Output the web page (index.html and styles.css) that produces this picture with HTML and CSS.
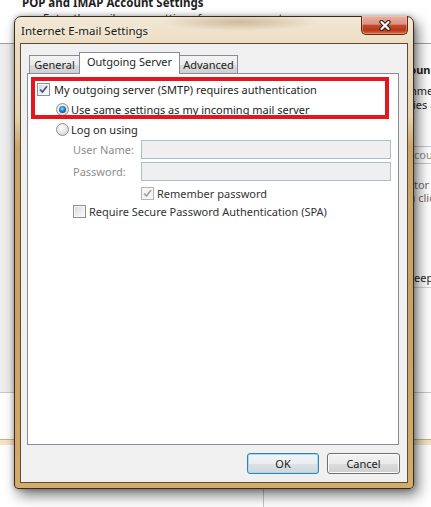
FILE: index.html
```html
<!doctype html>
<html lang="en">
<head>
    <!-- Title of the page -->
    <title>Internet E-mail Settings</title>
    <meta charset="utf-8" />
    <link rel="stylesheet" href="styles.css">
</head>
<body>
    <!-- Account wizard behind the dialog -->
    <div class="wizard">
        <div class="wiz-head">
            <div class="wiz-title">POP and IMAP Account Settings</div>
            <div class="wiz-sub">Enter the mail server settings for your account.</div>
        </div>
        <div class="wiz-body">
            <div class="wiz-left"></div>
            <div class="wiz-right">
                <div class="r-title">Test Account Settings</div>
                <div class="r-text first">We recommend that you test</div>
                <div class="r-text">your entries are correct.</div>
                <div class="r-btn">Test Account Settings ...</div>
                <div class="r-note first">Use monitor to test account settings</div>
                <div class="r-note">when you click Next</div>
                <div class="r-text keep">You can keep a copy of messages</div>
                <div class="r-sep"></div>
            </div>
        </div>
        <div class="wiz-gap"></div>
        <div class="wiz-bar"></div>
        <div class="wiz-foot"><div class="wiz-foot-left"></div></div>
    </div>

    <!-- Internet E-mail Settings dialog -->
    <div class="dialog">
        <div class="titlebar">
            <span class="title">Internet E-mail Settings</span>
            <div class="close">
                <svg width="14" height="11" viewBox="0 0 14 11">
                    <path d="M3.5 2 L10.5 9 M10.5 2 L3.5 9" stroke="#3b1d14" stroke-width="4.4" stroke-linecap="round" fill="none"/>
                    <path d="M3.5 2 L10.5 9 M10.5 2 L3.5 9" stroke="#ffffff" stroke-width="2.2" stroke-linecap="round" fill="none"/>
                </svg>
            </div>
        </div>

        <div class="client">
            <!-- Tabs -->
            <div class="tabs">
                <div class="tab general">General</div>
                <div class="tab active">Outgoing Server</div>
                <div class="tab advanced">Advanced</div>
            </div>

            <!-- Outgoing Server page -->
            <div class="panel">
                <div class="mark"></div>

                <div class="row r1">
                    <span class="cb">
                        <svg width="11" height="11" viewBox="0 0 11 11"><path d="M2 5.5 L4.4 8 L9 2.3" stroke="#40558a" stroke-width="1.7" fill="none"/></svg>
                    </span>
                    <span class="lbl">My outgoing server (SMTP) requires authentication</span>
                </div>

                <div class="row r2">
                    <span class="rb on"></span>
                    <span class="lbl rlbl">Use same settings as my incoming mail server</span>
                </div>

                <div class="row r3">
                    <span class="rb"></span>
                    <span class="lbl rlbl">Log on using</span>
                </div>

                <div class="row field r4">
                    <span class="flabel">User Name:</span>
                    <span class="input"></span>
                </div>

                <div class="row field r5">
                    <span class="flabel">Password:</span>
                    <span class="input"></span>
                </div>

                <div class="row r6">
                    <span class="cb disabled">
                        <svg width="11" height="11" viewBox="0 0 11 11"><path d="M2 5.5 L4.4 8 L9 2.3" stroke="#a2a2a2" stroke-width="1.7" fill="none"/></svg>
                    </span>
                    <span class="lbl sub">Remember password</span>
                </div>

                <div class="row r7">
                    <span class="cb"></span>
                    <span class="lbl sub">Require Secure Password Authentication (SPA)</span>
                </div>
            </div>

            <!-- Dialog buttons -->
            <div class="buttons">
                <button class="btn default">OK</button>
                <button class="btn">Cancel</button>
            </div>
        </div>
    </div>
</body>
</html>
```

FILE: styles.css
```css
body {
    margin: 0;
    width: 431px;
    height: 507px;
    overflow: hidden;
    position: relative;
    background-color: #fff;
    font-family: "Noto Sans", "Open Sans", sans-serif;
    font-size: 11px;
    color: #1e1e1e;
}

/* Wizard in the background */
.wizard {
    height: 507px;
    overflow: hidden;
}

.wiz-head {
    display: flow-root;
    height: 43px;
    border-bottom: 1px solid #a0a0a0;
    white-space: nowrap;
}

.wiz-title {
    margin-top: -5px;
    padding-left: 22px;
    font-weight: bold;
    font-size: 11.5px;
    line-height: 15px;
}

.wiz-sub {
    padding-left: 43px;
    line-height: 15px;
    color: #333;
}

.wiz-body {
    display: flex;
    height: 348px;
    border-bottom: 1px solid #c8c8c8;
}

.wiz-left {
    flex: none;
    width: 263px;
    background-color: #ededed;
}

.wiz-right {
    flex: 1;
    min-width: 0;
    overflow: hidden;
    padding: 19px 0 0 102px;
    white-space: nowrap;
}

.r-title {
    font-weight: bold;
    line-height: 14px;
}

.r-text {
    line-height: 14px;
}

.r-text.first {
    margin-top: 7px;
}

.r-btn {
    margin-top: 34px;
    height: 16px;
    line-height: 16px;
    border-top: 1px solid #c9c9c9;
    border-bottom: 1px solid #c9c9c9;
    color: #8c8c8c;
    padding-left: 13px;
}

.r-note {
    line-height: 13px;
    color: #6d6d6d;
}

.r-note.first {
    margin-top: 14px;
}

.r-text.keep {
    margin-top: 67px;
}

.r-sep {
    margin-top: 2px;
    height: 1px;
    background-color: #d4d4d4;
}

.wiz-gap {
    height: 46px;
}

.wiz-bar {
    height: 5px;
    background-color: #f3e4c6;
    border-top: 1px solid #cdae7a;
}

.wiz-foot {
    height: 62px;
}

.wiz-foot-left {
    width: 263px;
    height: 100%;
    border-right: 1px solid #c8c8c8;
}

/* Dialog window */
.dialog {
    position: absolute;
    left: 14px;
    top: 16px;
    width: 400px;
    height: 473px;
    box-sizing: border-box;
    border: 1px solid #3a2c1c;
    border-radius: 7px 7px 4px 4px;
    padding: 0 5px 5px;
    display: flex;
    flex-direction: column;
    background:
        radial-gradient(ellipse 80px 9px at 225px 5px, rgba(140, 100, 55, 0.35), transparent),
        linear-gradient(to bottom, #f3e9d8 0, #ecdcc0 28px, #e5d0ab 100px, #cba66b 130px, #c9a266 300px, #d3ab6b 100%);
    box-shadow: 4px 6px 14px rgba(0, 0, 0, 0.55), 0 0 5px rgba(0, 0, 0, 0.3);
}

.titlebar {
    height: 26px;
    display: flex;
    align-items: flex-start;
    flex: none;
}

.title {
    padding-left: 1px;
    line-height: 27px;
    font-size: 11.5px;
    color: #1a1a1a;
    text-shadow: 0 0 6px rgba(255, 255, 255, 0.8);
}

.close {
    margin-left: auto;
    margin-top: -1px;
    width: 47px;
    height: 19px;
    box-sizing: border-box;
    border: 1px solid #5a2a1c;
    border-top: none;
    border-radius: 0 0 5px 5px;
    display: flex;
    align-items: center;
    justify-content: center;
    background: linear-gradient(to bottom, #e8b0a0 0, #dc9380 45%, #c54a2e 52%, #b9361a 78%, #dc6a3c 100%);
    box-shadow: inset 0 0 0 1px rgba(255, 220, 200, 0.35);
}

.client {
    flex: 1;
    border: 1px solid #5d4c37;
    background-color: #f0f0f0;
    padding: 8px 7px 0 6px;
    display: flex;
    flex-direction: column;
}

/* Tabs */
.tabs {
    display: flex;
    align-items: flex-end;
    height: 21px;
    padding-left: 2px;
    flex: none;
}

.tab {
    height: 18px;
    box-sizing: border-box;
    border: 1px solid #898c95;
    border-bottom: none;
    margin-left: -1px;
    text-align: center;
    line-height: 17px;
    background: linear-gradient(to bottom, #f3f3f3 0, #ebebeb 50%, #dddddd 50%, #cfcfcf 100%);
}

.tab.general {
    width: 51px;
    margin-left: 0;
}

.tab.active {
    width: 101px;
    height: 22px;
    margin-bottom: -1px;
    background: #fff;
    position: relative;
    z-index: 1;
    line-height: 17px;
}

.tab.advanced {
    width: 59px;
}

.panel {
    flex: none;
    height: 372px;
    box-sizing: border-box;
    border: 1px solid #898c95;
    margin-right: 1px;
    background-color: #fff;
    position: relative;
    padding: 7px 0 0 9px;
}

/* red annotation box */
.mark {
    position: absolute;
    left: 3px;
    top: 3px;
    width: 358px;
    height: 42px;
    box-sizing: border-box;
    border: 4px solid #e5161d;
}

.row {
    display: flex;
    align-items: center;
    height: 16px;
    white-space: nowrap;
}

.r2, .r3 {
    margin-top: 4px;
    padding-left: 19px;
}

.field {
    height: 19px;
    margin-top: 3px;
    padding-left: 36px;
}

.r6 {
    margin-top: 4px;
    padding-left: 104px;
}

.r7 {
    margin-top: 2px;
    padding-left: 36px;
}

.lbl {
    margin-left: 4px;
}

.lbl.rlbl {
    margin-left: 2px;
}

.lbl.sub {
    margin-left: 3px;
    color: #333;
}

.flabel {
    width: 68px;
    color: #8d8d8d;
}

.input {
    width: 250px;
    height: 19px;
    box-sizing: border-box;
    border: 1px solid #afbccb;
    background-color: #efefef;
}

/* Checkboxes and radios */
.cb {
    width: 13px;
    height: 13px;
    box-sizing: border-box;
    border: 1px solid #8e8f8f;
    flex: none;
    display: flex;
    align-items: center;
    justify-content: center;
    background: linear-gradient(135deg, #d3d4d6 0, #eeeeee 55%, #fbfbfb 100%);
    box-shadow: inset 0 0 0 1px #f6f6f6;
}

.cb.disabled {
    border-color: #b4b4b4;
    background: #f4f4f4;
}

.rb {
    width: 13px;
    height: 13px;
    box-sizing: border-box;
    border: 1px solid #8e8f8f;
    border-radius: 50%;
    flex: none;
    display: flex;
    align-items: center;
    justify-content: center;
    background: radial-gradient(circle at 40% 35%, #fcfcfc 0, #e4e4e4 55%, #cdcdcd 100%);
}

.rb.on::after {
    content: "";
    width: 7px;
    height: 7px;
    border-radius: 50%;
    background: radial-gradient(circle at 45% 40%, #8fdcff 0, #2c93dc 35%, #145a96 65%, #0f3559 100%);
}

/* Dialog buttons */
.buttons {
    display: flex;
    justify-content: flex-end;
    gap: 8px;
    margin-top: 8px;
}

.btn {
    width: 73px;
    height: 21px;
    padding: 0;
    box-sizing: border-box;
    border: 1px solid #707070;
    border-radius: 3px;
    font-family: inherit;
    font-size: 11px;
    color: #1a1a1a;
    background: linear-gradient(to bottom, #f2f2f2 0, #ebebeb 50%, #dddddd 50%, #cfcfcf 100%);
    box-shadow: inset 0 0 0 1px #fcfcfc;
}

.btn.default {
    width: 72px;
    border-color: #3c7fb1;
    background: linear-gradient(to bottom, #f3f6f8 0, #eaeef1 50%, #dbe1e5 50%, #d0d7dc 100%);
    box-shadow: inset 0 0 0 1px #9fdcf7;
}
```
